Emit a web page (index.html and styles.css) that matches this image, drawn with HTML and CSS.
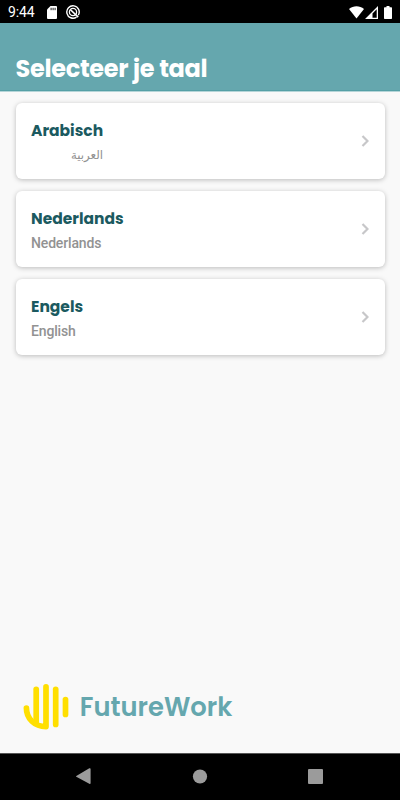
FILE: index.html
```
<!DOCTYPE html>
<html lang="nl">
<head>
<meta charset="utf-8">
<title>Selecteer je taal</title>
<link rel="stylesheet" href="styles.css">
</head>
<body>
<div class="screen">
  <div class="status">
    <span class="clock">9:44</span>
    <svg class="sd" width="10" height="13" viewBox="0 0 10 13"><path d="M3.500 0H9a1 1 0 0 1 1 1v11a1 1 0 0 1-1 1H1a1 1 0 0 1-1-1V3.500z" fill="#fff"/><path d="M4.100 1.800v2.400M6.100 1.800v2.400M8.100 1.800v2.400" stroke="#000" stroke-width=".9"/></svg>
    <svg class="sync" width="14" height="14" viewBox="0 0 14 14" fill="none" stroke="#fff"><path d="M10.500 12.100A6.200 6.200 0 1 1 12.300 10.200" stroke-width="1.400"/><circle cx="7" cy="7" r="3.600" stroke-width="1.300"/><path d="M4.200 4.500L12.200 12.200" stroke-width="1.700"/></svg>
    <div class="signals">
      <svg width="15" height="13" viewBox="0 0 15 13"><path d="M0 3C4.300-.8 10.700-.8 15 3L7.500 12.600z" fill="#fff"/></svg>
      <svg width="13" height="13" viewBox="0 0 13 13"><path fill-rule="evenodd" d="M0 13L13 0V13zM7.500 11.800H11.700V3.200L7.500 7.400z" fill="#fff"/></svg>
      <svg class="battery" width="8" height="13" viewBox="0 0 8 13"><path d="M2.500 0h3v1.300H7.300q.7 0 .7.700V12.300q0 .7-.7.700H.7q-.7 0-.7-.7V2q0-.7.7-.7H2.500z" fill="#fff"/></svg>
    </div>
  </div>
  <header class="header"><h1>Selecteer je taal</h1></header>
  <main class="list">
    <div class="card">
      <div class="labels"><h2>Arabisch</h2><p class="arabic" lang="ar" dir="rtl">العربية</p></div>
      <svg class="chevron" width="8" height="12" viewBox="0 0 8 12"><path d="M1.500 1L6.500 6L1.500 11"/></svg>
    </div>
    <div class="card">
      <div class="labels"><h2>Nederlands</h2><p>Nederlands</p></div>
      <svg class="chevron" width="8" height="12" viewBox="0 0 8 12"><path d="M1.500 1L6.500 6L1.500 11"/></svg>
    </div>
    <div class="card">
      <div class="labels"><h2>Engels</h2><p>English</p></div>
      <svg class="chevron" width="8" height="12" viewBox="0 0 8 12"><path d="M1.500 1L6.500 6L1.500 11"/></svg>
    </div>
  </main>
  <footer class="brand">
    <svg width="240" height="48" viewBox="0 0 240 48">
      <g fill="none" stroke="#ffdf00" stroke-width="5.700" stroke-linecap="round" stroke-linejoin="round">
        <path d="M6.400 26C6.400 36.500 14.500 44.600 26 44.600V4.800"/>
        <path d="M16.200 7.300V40"/>
        <path d="M35.700 7.300V42.500"/><path d="M45.500 17.500V32.500"/>
      </g>
      <text class="wordmark" x="59.800" y="34" textLength="152.500" lengthAdjust="spacingAndGlyphs">FutureWork</text>
    </svg>
  </footer>
  <nav class="nav">
    <svg width="400" height="46" viewBox="0 1 400 46" fill="#9b9b9b"><path d="M76.300 22.900L89.300 15.300q1.300-.5 1.300.8V30.100q0 1.300-1.300.7L76.300 23.700q-.6-.4 0-.8z"/><circle cx="200" cy="23.500" r="7.100"/><rect x="308" y="16" width="15" height="15" rx="1"/></svg>
  </nav>
</div>
</body>
</html>
```
FILE: styles.css
```
* { box-sizing: border-box; }
body, h1, h2, p { margin: 0; }
svg { display: block; flex: none; }
.screen {
  width: 400px; height: 800px; overflow: hidden;
  display: flex; flex-direction: column;
  background: #f9f9f9; font-family: Roboto, sans-serif;
}
.status {
  height: 23px; flex: none; background: #000; color: #fff;
  display: flex; align-items: center; padding: 1px 8px 0;
}
.clock { width: 39px; font-size: 14px; line-height: 22px; letter-spacing: -.1px; }
.sync { margin-left: 9px; }
.signals { margin-left: auto; display: flex; }
.signals svg + svg { margin-left: 1px; }
.signals .battery { margin-left: 6px; }
.header {
  height: 69px; flex: none; padding: 28px 15.500px 0;
  background: #65a7ae; border-bottom: 1px solid #b5d5d8;
  box-shadow: inset 0 -1px #55a0a6;
}
h1 {
  font: 700 24px/36px Poppins, Inter, sans-serif;
  letter-spacing: -.3px; color: #fff; white-space: nowrap;
}
.list { flex: 1; display: flex; flex-direction: column; gap: 12px; padding: 11px 15.500px 0; }
.card {
  height: 76px; flex: none; padding: 16px 15.500px 0; background: #fff; border-radius: 6px;
  box-shadow: 0 1px 5px rgba(0, 0, 0, .25);
  display: flex; justify-content: space-between;
}
h2 { font: 700 15.500px/24px Poppins, Inter, sans-serif; color: #1b5a60; white-space: nowrap; }
.labels p { font-size: 14px; letter-spacing: -.15px; line-height: 18px; margin-top: 3px; color: #929292; font-weight: 500; }
.labels .arabic { font-family: "Noto Sans", "DejaVu Sans", sans-serif; font-size: 11.800px; letter-spacing: 0; font-weight: 400; margin-top: 2px; }
.chevron { margin-top: 16px; fill: none; stroke: #c7c7c9; stroke-width: 2.200; }
.brand { height: 71px; flex: none; padding-left: 20px; }
.wordmark { font: 600 27px Poppins, Inter, sans-serif; fill: #65a7ae; }
.nav { height: 47px; flex: none; background: #000; border-top: 1px solid #555; }
```
